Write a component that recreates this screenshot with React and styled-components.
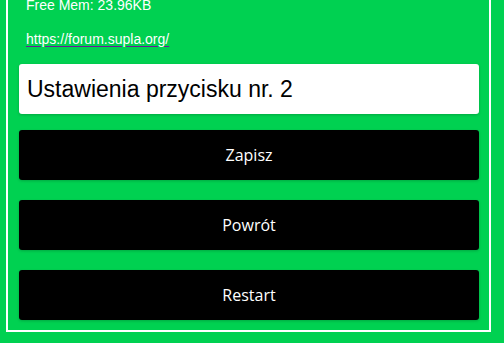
import React from "react";
import { styled, createGlobalStyle } from "styled-components";

const GlobalStyle = createGlobalStyle`
  html, body {
    margin: 0;
    padding: 0;
    background-color: #00d151;
    overflow: hidden;
  }
`;

const Page = styled.div`
  width: 504px;
  height: 343px;
  overflow: hidden;
  background-color: #00d151;
`;

const Frame = styled.div`
  margin: 0 13px 0 6px;
  border: 2px solid #fff;
  border-top: none;
  padding: 0 10px 10px 11px;
  display: flex;
  flex-direction: column;
`;

const Info = styled.p`
  margin: ${(props) => props.$top || 0}px 0 ${(props) => props.$gap || 0}px;
  padding-left: 7px;
  font-family: "Liberation Sans", Arial, sans-serif;
  font-size: 14px;
  line-height: 16px;
  color: #fff;
`;

const Link = styled.a`
  color: #fff;
  text-decoration: underline;
  text-decoration-color: #6a1b9a;
  text-underline-offset: 2px;
`;

const Title = styled.div`
  height: 50px;
  margin-top: 17px;
  padding: 0 8px;
  display: flex;
  align-items: center;
  background-color: #fff;
  border-radius: 3px;
  box-shadow: 0 1px 3px rgba(0, 0, 0, 0.2);
  font-family: "Liberation Sans", Arial, sans-serif;
  font-size: 23px;
  color: #000;
`;

const Button = styled.button`
  height: 50px;
  margin-top: ${(props) => props.$top}px;
  border: none;
  border-radius: 3px;
  background-color: #000;
  color: #fff;
  font-family: "Open Sans", sans-serif;
  font-size: 16px;
  box-shadow: 0 1px 3px rgba(0, 0, 0, 0.2);
  cursor: pointer;
`;

const App = () => {
  return (
    <Page>
      <GlobalStyle />
      <Frame>
        <Info $top={-3} $gap={18}>
          Free Mem: 23.96KB
        </Info>
        <Info>
          <Link href="https://forum.supla.org/">https://forum.supla.org/</Link>
        </Info>
        <Title>Ustawienia przycisku nr. 2</Title>
        <Button $top={16}>Zapisz</Button>
        <Button $top={20}>Powrót</Button>
        <Button $top={20}>Restart</Button>
      </Frame>
    </Page>
  );
};

export default App;
